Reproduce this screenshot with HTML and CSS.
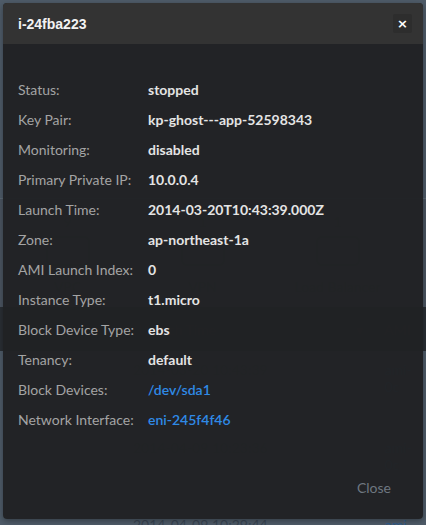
FILE: index.html
```html
<!DOCTYPE html>
<html>
<head>
<meta charset="utf-8">
<link rel="stylesheet" href="styles.css">
</head>
<body>
<div class="page">
  <div class="topbar"></div>
  <div class="stats">
    <div class="stat"><span class="num">9</span><span class="hex"></span><span class="lbl">VPC</span></div>
    <div class="stat"><span class="num">1</span><span class="hex"></span><span class="lbl">VPN</span></div>
    <div class="stat"><span class="num">1</span><span class="hex"></span><span class="lbl">Load Balancer</span></div>
  </div>
  <div class="thead"><span class="th1">Launch Time</span><span class="caret">▾</span><span class="th2">AMI</span></div>
  <div class="trow"><span class="td1">2014-03-20 10:43:39</span><span class="td2">ami-0c</span></div>
  <div class="trow"><span class="td1">2014-04-09 10:23:36</span><span class="td2">ami-0c</span></div>
  <div class="trow last"><span class="td1">2014-04-09 10:29:44</span><span class="td2">ami-0c</span></div>
</div>

<div class="modal">
  <div class="modal-header">
    <span class="modal-title">i-24fba223</span>
    <span class="close-x">×</span>
  </div>
  <div class="modal-body">
    <div class="k">Status:</div><div class="v">stopped</div>
    <div class="k">Key Pair:</div><div class="v">kp-ghost---app-52598343</div>
    <div class="k">Monitoring:</div><div class="v">disabled</div>
    <div class="k">Primary Private IP:</div><div class="v">10.0.0.4</div>
    <div class="k">Launch Time:</div><div class="v">2014-03-20T10:43:39.000Z</div>
    <div class="k">Zone:</div><div class="v">ap-northeast-1a</div>
    <div class="k">AMI Launch Index:</div><div class="v">0</div>
    <div class="k">Instance Type:</div><div class="v">t1.micro</div>
    <div class="k">Block Device Type:</div><div class="v">ebs</div>
    <div class="k">Tenancy:</div><div class="v">default</div>
    <div class="k">Block Devices:</div><div class="v link">/dev/sda1</div>
    <div class="k">Network Interface:</div><div class="v link">eni-245f4f46</div>
  </div>
  <div class="modal-footer">
    <span class="close-btn">Close</span>
  </div>
</div>
</body>
</html>
```
FILE: styles.css
```css
html, body {
  margin: 0;
  padding: 0;
}
body {
  width: 426px;
  height: 525px;
  overflow: hidden;
  background: #4f5c69;
  font-family: Lato, "Open Sans", sans-serif;
  position: relative;
}

/* ghost page behind the modal */
.page {
  display: flex;
  flex-direction: column;
  color: #3c4956;
  height: 525px;
  overflow: hidden;
}
.topbar {
  height: 198px;
  flex: none;
  border-bottom: 1px solid #5d6975;
}
.stats {
  display: flex;
  flex: none;
  height: 108px;
  background: #4b5561;
}
.stat {
  width: 135px;
  display: flex;
  flex-direction: column;
  align-items: center;
  padding-top: 14px;
  font-size: 14px;
}
.stat .hex {
  width: 40px;
  height: 26px;
  border: 2px solid #434d58;
  border-radius: 6px;
  margin: 6px 0 12px;
}
.thead {
  height: 44px;
  flex: none;
  background: #2a2f35;
  display: flex;
  align-items: center;
  font-size: 14px;
  color: #363d45;
}
.th1 { margin-left: 138px; width: 218px; }
.caret { width: 28px; }
.trow {
  height: 78px;
  flex: none;
  display: flex;
  align-items: flex-start;
  padding-top: 10px;
  box-sizing: border-box;
  font-size: 14px;
  color: #3a4654;
}
.trow.last { height: 20px; padding-top: 9px; }
.td1 { margin-left: 133px; width: 255px; }
.td2 { color: #2f5f8f; }

/* modal */
.modal {
  position: absolute;
  left: 3px;
  top: 3px;
  width: 420px;
  height: 516px;
  border-radius: 4px;
  overflow: hidden;
  background: rgba(32, 33, 35, 0.96);
  box-shadow: 0 2px 6px rgba(0,0,0,0.35);
  display: flex;
  flex-direction: column;
}
.modal-header {
  height: 41px;
  flex: none;
  background: #333333;
  display: flex;
  align-items: center;
  justify-content: space-between;
  padding: 0 11px 0 15px;
}
.modal-title {
  font-family: "Liberation Sans", Arial, sans-serif;
  font-weight: bold;
  font-size: 14px;
  color: #f2f2f2;
}
.close-x {
  width: 19px;
  height: 19px;
  background: #2d2d2d;
  border-radius: 2px;
  color: #ffffff;
  font-family: "DejaVu Sans", sans-serif;
  font-weight: bold;
  font-size: 13px;
  line-height: 19px;
  text-align: center;
}
.modal-body {
  display: grid;
  grid-template-columns: 130px 1fr;
  grid-auto-rows: 30px;
  align-items: center;
  padding: 30px 15px 0 15px;
  font-size: 14px;
}
.k {
  color: #a4a4a4;
}
.v {
  color: #e4e4e4;
  font-weight: bold;
}
.v.link {
  color: #2f8ae6;
  font-weight: 600;
}
.modal-footer {
  display: flex;
  justify-content: flex-end;
  padding: 44px 32px 0 0;
}
.close-btn {
  color: #6e7780;
  font-size: 14px;
  line-height: 20px;
}
```
